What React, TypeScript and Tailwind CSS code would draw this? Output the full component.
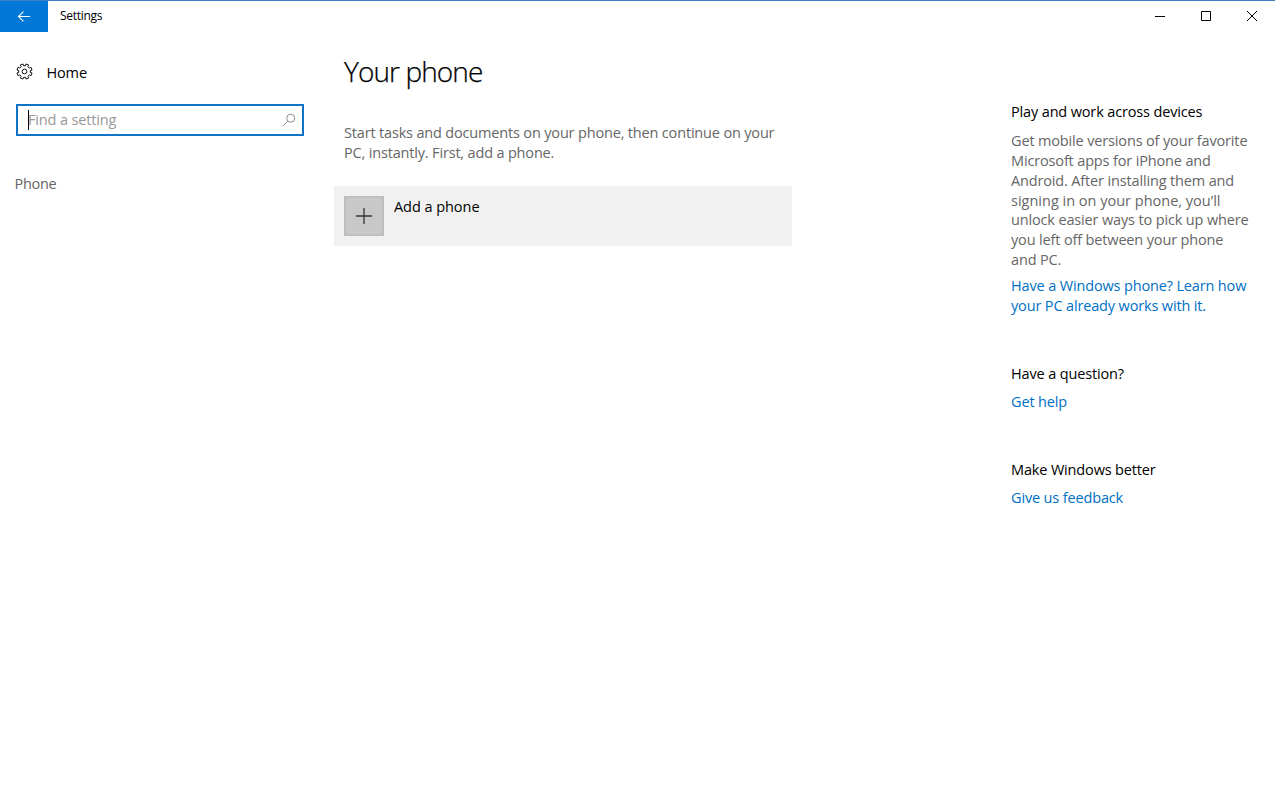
import type { ReactNode } from "react";

function BackIcon() {
  return (
    <svg width="14" height="12" viewBox="0 0 14 12" fill="none" stroke="#fff" strokeWidth="1.1">
      <path d="M1.5 5.5H13M6.4 0.6L1.5 5.5L6.4 10.4" />
    </svg>
  );
}

function GearIcon() {
  const teeth = Array.from({ length: 8 }, (_, i) => {
    const base = ((i + 0.5) * Math.PI) / 4;
    const point = (r: number, a: number) =>
      `${(8.5 + r * Math.cos(base + a)).toFixed(2)} ${(8.5 + r * Math.sin(base + a)).toFixed(2)}`;
    return `${point(5.9, -0.22)}L${point(7.7, -0.2)}L${point(7.7, 0.2)}L${point(5.9, 0.22)}`;
  });
  return (
    <svg width="17" height="17" viewBox="0 0 17 17" fill="none" stroke="#111" strokeWidth="1" strokeLinejoin="round">
      <path d={`M${teeth.join("L")}Z`} />
      <circle cx="8.5" cy="8.5" r="2.4" />
    </svg>
  );
}

function SearchIcon() {
  return (
    <svg width="14" height="14" viewBox="0 0 14 14" fill="none" stroke="#8c8c8c" strokeWidth="1">
      <circle cx="8.7" cy="5.2" r="4" />
      <path d="M5.8 8.1L1 12.9" />
    </svg>
  );
}

function WindowButton({ label, children }: { label: string; children: ReactNode }) {
  return (
    <button aria-label={label} className="flex h-[31px] w-[46px] items-center justify-center pb-px">
      <svg width="12" height="12" viewBox="0 0 12 12" fill="none" stroke="#000" strokeWidth="1">
        {children}
      </svg>
    </button>
  );
}

function HelpSection({ title, link }: { title: string; link: string }) {
  return (
    <section>
      <h2 className="text-black">{title}</h2>
      <a className="mt-2 block text-[#0070c4]">{link}</a>
    </section>
  );
}

export default function App() {
  return (
    <div className="flex h-[811px] w-[1275px] flex-col overflow-hidden bg-white font-['Open_Sans',sans-serif] text-[14.5px] leading-5 tracking-[-0.15px] whitespace-nowrap text-[#666]">
      <header className="flex h-8 border-t border-[#3c82c4]">
        <button aria-label="Back" className="flex h-[31px] w-12 items-center justify-center bg-[#0078d7]">
          <BackIcon />
        </button>
        <span className="ml-3 flex-1 pt-[5px] text-[12px] tracking-[-0.3px] text-black">Settings</span>
        <WindowButton label="Minimize">
          <path d="M1 6.5H11" />
        </WindowButton>
        <WindowButton label="Maximize">
          <path d="M1.5 1.5H10.5V10.5H1.5Z" />
        </WindowButton>
        <WindowButton label="Close">
          <path d="M1 1L11 11M11 1L1 11" />
        </WindowButton>
      </header>

      <div className="flex flex-1">
        <nav className="w-[334px] pt-[31px]">
          <div className="flex h-5 items-start pl-[15.5px] text-black">
            <GearIcon />
            <span className="ml-[14px]">Home</span>
          </div>
          <div className="mt-[21px] ml-4 flex h-8 w-72 items-center border-2 border-[#0f74c6] pr-[6px] pl-[10px]">
            <span className="h-5 w-px bg-black" />
            <span className="-ml-px flex-1 text-[#999]">Find a setting</span>
            <SearchIcon />
          </div>
          <div className="mt-[38px] pl-[14.5px] tracking-[-0.3px]">Phone</div>
        </nav>

        <main className="w-[458px] pt-[21px]">
          <h1 className="pl-[10px] text-[28px] leading-9 font-light tracking-[-0.9px] text-black [-webkit-text-stroke:0.25px_#000]">
            Your phone
          </h1>
          <p className="mt-[34px] pl-[10px] tracking-[-0.17px]">
            Start tasks and documents on your phone, then continue on your
            <br />
            PC, instantly. First, add a phone.
          </p>
          <button className="mt-[23px] flex h-[60px] w-full gap-[10px] bg-[#f1f1f1] p-[10px] text-left text-black">
            <span className="flex size-10 items-center justify-center border-2 border-[#bebebe] bg-[#c8c8c8]">
              <svg width="16" height="16" viewBox="0 0 16 16" fill="none" stroke="#333" strokeWidth="1.3">
                <path d="M0 8H16M8 0V16" />
              </svg>
            </span>
            <span className="pt-px tracking-[-0.05px]">Add a phone</span>
          </button>
        </main>

        <aside className="ml-[218px] w-[265px] pt-[70px] pl-px">
          <h2 className="text-black">Play and work across devices</h2>
          <p className="mt-[9px] leading-[19.85px]">
            Get mobile versions of your favorite
            <br />
            Microsoft apps for iPhone and
            <br />
            Android. After installing them and
            <br />
            <span className="tracking-[0]">signing in on your phone, you’ll</span>
            <br />
            unlock easier ways to pick up where
            <br />
            you left off between your phone
            <br />
            and PC.
          </p>
          <a className="mt-[6px] block text-[#0070c4]">
            Have a Windows phone? Learn how
            <br />
            your PC already works with it.
          </a>
          <div className="mt-12 flex flex-col gap-12">
            <HelpSection title="Have a question?" link="Get help" />
            <HelpSection title="Make Windows better" link="Give us feedback" />
          </div>
        </aside>
      </div>
    </div>
  );
}
